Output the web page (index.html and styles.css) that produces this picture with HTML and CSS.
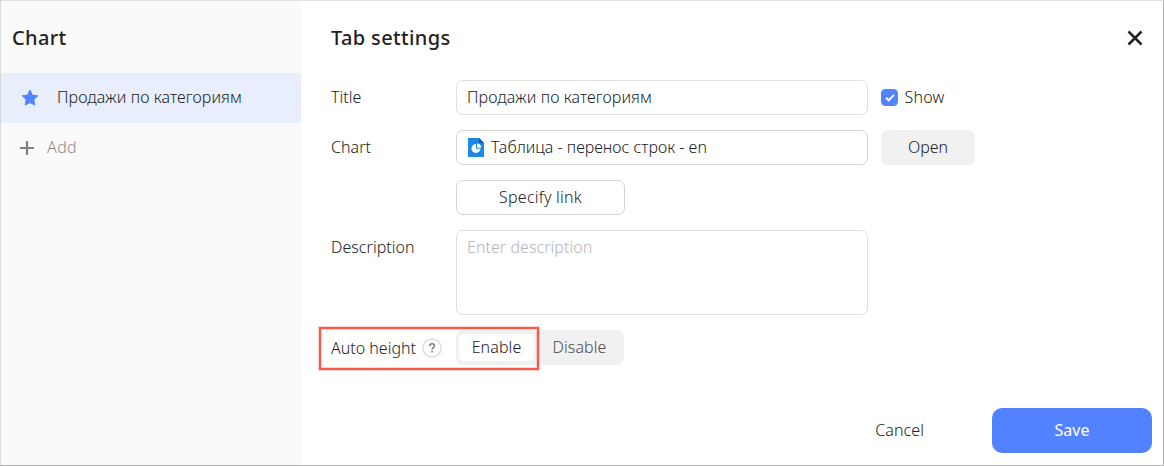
FILE: index.html
```html
<!DOCTYPE html>
<html lang="en">
<head>
<meta charset="utf-8">
<title>Tab settings</title>
<link rel="stylesheet" href="styles.css">
</head>
<body>
<div class="dialog">
  <aside class="sidebar">
    <h2 class="heading sidebar-heading">Chart</h2>
    <div class="tab tab-active">
      <svg class="star" width="20" height="20" viewBox="0 0 20 20"><path d="M10 2.100l2.300 5 5.500.7-4 3.800 1 5.500L10 14.600l-4.800 2.500 1-5.500-4-3.800 5.500-.7z" fill="#5282ff" stroke="#5282ff" stroke-width="1" stroke-linejoin="round"/></svg>
      <span class="name">Продажи по категориям</span>
    </div>
    <div class="tab tab-add">
      <svg class="plus" width="16" height="16" viewBox="0 0 16 16"><path d="M8 1v14M1 8h14" stroke="#808080" stroke-width="2.200"/></svg>
      <span>Add</span>
    </div>
  </aside>
  <main class="main">
    <header class="header">
      <h2 class="heading">Tab settings</h2>
      <svg class="close" width="16" height="16" viewBox="0 0 16 16"><path d="M1.500 1.500l13 13M14.500 1.500l-13 13" stroke="#222" stroke-width="2.500"/></svg>
    </header>
    <div class="form">
      <div class="row">
        <div class="label">Title</div>
        <div class="field"><span class="name">Продажи по категориям</span></div>
        <div class="show">
          <svg width="17" height="17" viewBox="0 0 17 17"><rect width="17" height="17" rx="4.500" fill="#5282ff"/><path d="M5 8.700l2.700 2.600 5.300-5.400" fill="none" stroke="#fff" stroke-width="2"/></svg>
          <span>Show</span>
        </div>
      </div>
      <div class="row">
        <div class="label">Chart</div>
        <div class="field field-select">
          <svg class="doc" width="16" height="19" viewBox="0 0 16 19"><path d="M0 0h11l5 5v14H0z" fill="#1e88e5"/><path d="M11 0l5 5h-5z" fill="#1055b5"/><path d="M8 6a4.500 4.500 0 1 0 4.500 4.800H8z" fill="#fff"/><path d="M9 5.400a4.400 4.400 0 0 1 4.200 4.300H9z" fill="#fff"/></svg>
          <span>Таблица - перенос строк - en</span>
        </div>
        <div class="button button-open">Open</div>
      </div>
      <div class="row">
        <div class="label"></div>
        <div class="button button-link">Specify link</div>
      </div>
      <div class="row row-area">
        <div class="label">Description</div>
        <div class="field area">Enter description</div>
      </div>
      <div class="row">
        <div class="label label-height"><span>Auto height</span>
          <svg class="help" width="20" height="20" viewBox="0 0 20 20"><circle cx="10" cy="10" r="9.200" fill="none" stroke="#d9d9d9" stroke-width="1.300"/><path d="M7.600 8c.1-1.500 1-2.300 2.400-2.300s2.400.8 2.400 2.100c0 1.900-2.300 1.800-2.300 3.800M10.100 12.700v1.700" fill="none" stroke="#808080" stroke-width="1.600"/></svg>
        </div>
        <div class="switch">
          <div class="option option-on">Enable</div>
          <div class="option">Disable</div>
        </div>
        <div class="highlight"></div>
      </div>
    </div>
    <footer class="footer">
      <span>Cancel</span>
      <div class="button button-save">Save</div>
    </footer>
  </main>
</div>
</body>
</html>
```
FILE: styles.css
```css
* { box-sizing: border-box; }
body { margin: 0; font: 300 16px/20px "Noto Sans", "Open Sans", sans-serif; color: #222; }
span { white-space: nowrap; }
svg { flex: none; display: block; }
.dialog { width: 1164px; height: 466px; display: flex; background: #fff; border: 1px solid #b3b3b3; border-top-color: #e1e1e1; border-left-color: #d9d9d9; }
.sidebar { width: 300px; background: #fafafa; }
.heading { margin: 0; font-size: 20px; line-height: 28px; font-weight: 500; letter-spacing: .35px; }
.sidebar-heading { height: 72px; padding: 23px 11px 0; }
.tab { height: 50px; display: flex; align-items: center; }
.tab span { margin-top: -2px; }
.name { letter-spacing: .1px; }
.tab-active { background: #e8eefb; padding-left: 19px; gap: 17px; }
.tab-add { color: #8c8c8c; padding-left: 18px; gap: 12px; letter-spacing: .4px; }
.main { flex: 1; display: flex; flex-direction: column; }
.header { height: 79px; padding: 23px 20.5px 0 30px; display: flex; justify-content: space-between; }
.close { margin-top: 6px; }
.form { display: flex; flex-direction: column; gap: 15px; padding-left: 30px; }
.row { display: flex; height: 35px; position: relative; }
.row-area { height: 85px; }
.label { width: 125px; padding-top: 7px; letter-spacing: .05px; }
.field { width: 412px; border: 1px solid #e0e0e0; border-radius: 7px; padding: 6px 10px; }
.field-select { display: flex; gap: 7px; border-color: #d4d4d4; padding-left: 11px; }
.doc { margin-top: 1px; }
.area { color: #b5b5b5; letter-spacing: .05px; }
.show { display: flex; align-items: center; gap: 6.5px; margin-left: 13px; letter-spacing: .2px; }
.show span { margin-top: -2px; }
.button { display: flex; align-items: center; justify-content: center; border-radius: 7px; padding-bottom: 2px; }
.button-open { width: 94px; margin-left: 13px; background: #f1f1f1; }
.button-link { width: 169px; border: 1px solid #d4d4d4; letter-spacing: .25px; }
.label-height { display: flex; gap: 6px; padding-top: 8px; letter-spacing: 0; }
.switch { width: 168px; display: flex; background: #f1f1f1; border-radius: 7px; padding: 4px 3px; }
.option { flex: 1; display: flex; align-items: center; justify-content: center; padding: 0 0 2px 4px; color: #4d4d4d; letter-spacing: .1px; }
.option-on { flex: 0 0 75px; background: #fff; border-radius: 5px; padding-left: 0; color: #222; }
.highlight { position: absolute; left: -12px; top: -3px; width: 220px; height: 43px; border: 2px solid #f9594b; box-shadow: 0 0 0 1px #f9594b40, inset 0 0 0 1px #f9594b40; }
.footer { display: flex; justify-content: flex-end; align-items: center; gap: 68px; margin-top: 43px; padding-right: 11px; letter-spacing: .1px; }
.footer span { margin-top: -2px; }
.button-save { width: 160px; height: 45px; border-radius: 10px; background: #5282ff; color: #fff; font-weight: 400; letter-spacing: 0; }
```
